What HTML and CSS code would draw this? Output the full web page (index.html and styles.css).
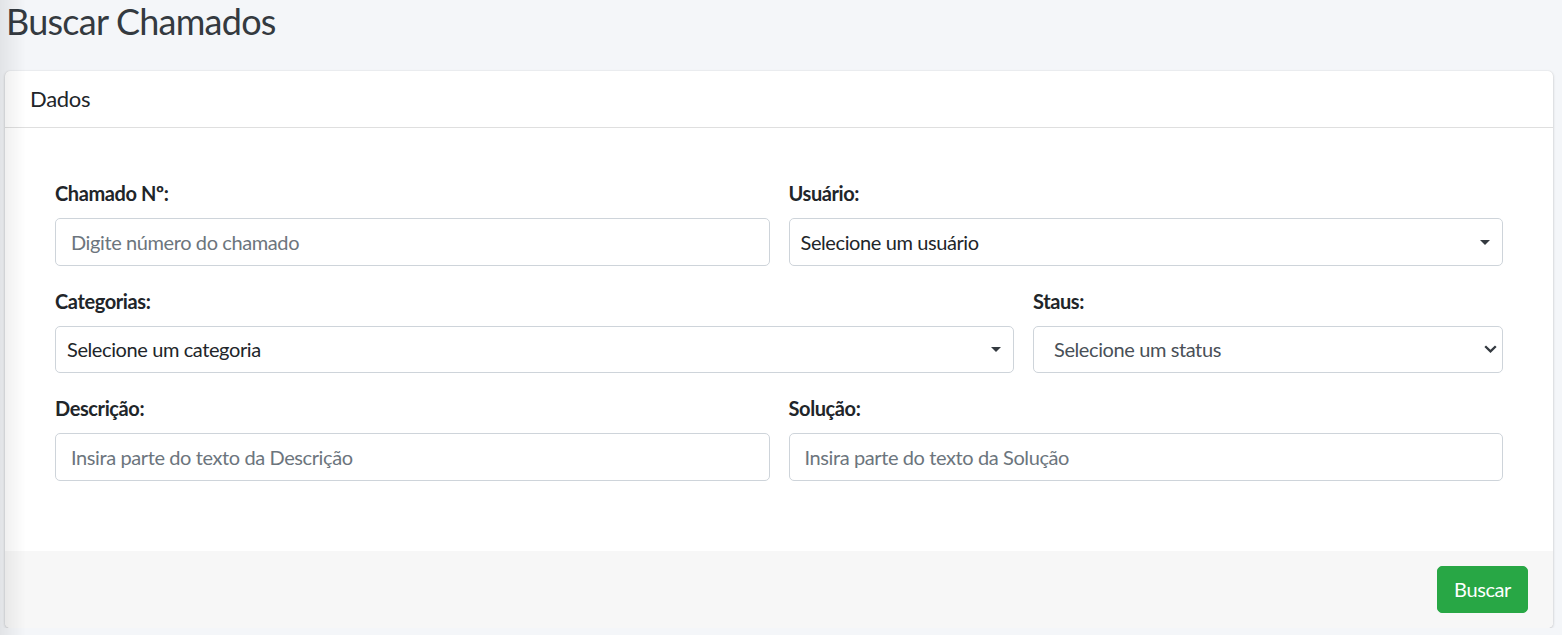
FILE: index.html
```html
<!DOCTYPE html>
<html lang="pt-BR">
<head>
<meta charset="utf-8">
<title>Buscar Chamados</title>
<link rel="stylesheet" href="styles.css">
</head>
<body>
<div class="sidebar-shadow"></div>
<div class="content">
  <h1 class="page-title">Buscar Chamados</h1>
  <div class="card">
    <div class="card-header"><h3 class="card-title">Dados</h3></div>
    <div class="card-body">
      <div class="form-grid">
        <div class="form-group span-3">
          <label class="form-label">Chamado Nº:</label>
          <input class="form-control" type="text" placeholder="Digite número do chamado">
        </div>
        <div class="form-group span-3">
          <label class="form-label">Usuário:</label>
          <div class="select2">
            <span class="select2-text">Selecione um usuário</span>
            <span class="select2-arrow"></span>
          </div>
        </div>
        <div class="form-group span-4">
          <label class="form-label">Categorias:</label>
          <div class="select2">
            <span class="select2-text">Selecione um categoria</span>
            <span class="select2-arrow"></span>
          </div>
        </div>
        <div class="form-group span-2">
          <label class="form-label">Staus:</label>
          <div class="native-select">
            <span class="native-text">Selecione um status</span>
            <svg class="chevron" width="13" height="8" viewBox="0 0 13 8"><path d="M1.2 1.2 L6.5 6.4 L11.8 1.2" fill="none" stroke="#343a40" stroke-width="2.3"/></svg>
          </div>
        </div>
        <div class="form-group span-3">
          <label class="form-label">Descrição:</label>
          <input class="form-control" type="text" placeholder="Insira parte do texto da Descrição">
        </div>
        <div class="form-group span-3">
          <label class="form-label">Solução:</label>
          <input class="form-control" type="text" placeholder="Insira parte do texto da Solução">
        </div>
      </div>
    </div>
    <div class="card-footer">
      <button class="btn-success" type="button">Buscar</button>
    </div>
  </div>
</div>
</body>
</html>
```

FILE: styles.css
```css
* { box-sizing: border-box; }
html, body { margin: 0; padding: 0; }
body {
  background: #f4f6f9;
  font-family: "Source Sans Pro", Lato, "Liberation Sans", sans-serif;
  color: #212529;
  font-size: 20px;
  letter-spacing: -0.4px;
  overflow: hidden;
}
.sidebar-shadow {
  position: fixed;
  top: 0; left: 0; bottom: 0;
  width: 26px;
  background: linear-gradient(to right, rgba(0,0,0,0.07), rgba(0,0,0,0));
  pointer-events: none;
  z-index: 10;
}
.content {
  padding: 0 9px 0 5px;
}
.page-title {
  margin: 0 0 28px 1px;
  font-size: 36px;
  font-weight: 400;
  line-height: 1.2;
  letter-spacing: -0.75px;
  color: #343a40;
}
.card {
  background: #fff;
  border-radius: 5px;
  box-shadow: 0 0 1px rgba(0,0,0,.125), 0 1px 3px rgba(0,0,0,.2);
  overflow: hidden;
}
.card-header {
  padding: 15px 25px;
  border-bottom: 1px solid rgba(0,0,0,.125);
}
.card-title {
  margin: 0;
  font-size: 22px;
  font-weight: 400;
  line-height: 26px;
  letter-spacing: -0.3px;
  color: #212529;
}
.card-body {
  padding: 50px 50px 50px;
}
.form-grid {
  display: grid;
  grid-template-columns: repeat(6, 1fr);
  column-gap: 19px;
}
.span-2 { grid-column: span 2; }
.span-3 { grid-column: span 3; }
.span-4 { grid-column: span 4; }
.form-group {
  margin-bottom: 20px;
}
.form-label {
  display: block;
  font-weight: 700;
  line-height: 30px;
  margin-bottom: 10px;
  color: #212529;
}
.form-control, .select2, .native-select {
  display: flex;
  align-items: center;
  width: 100%;
  height: 47.5px;
  border: 1px solid #ced4da;
  border-radius: 5px;
  background: #fff;
  font-family: inherit;
  font-size: 20px;
  letter-spacing: -0.4px;
  color: #495057;
}
.form-control {
  padding: 7.5px 15px;
  outline: none;
}
.form-control::placeholder { color: #6c757d; opacity: 1; }
.select2 {
  padding: 0 12px 0 11px;
  justify-content: space-between;
  color: #212529;
}
.select2-arrow {
  width: 0; height: 0;
  border-left: 5px solid transparent;
  border-right: 5px solid transparent;
  border-top: 5px solid #343a40;
  margin-top: 1px;
}
.native-select {
  padding: 0 5px 0 20px;
  justify-content: space-between;
  color: #495057;
}
.chevron { display: block; }
.card-footer {
  background: #f7f7f7;
  padding: 15px 25px;
  display: flex;
  justify-content: flex-end;
}
.btn-success {
  height: 47.5px;
  padding: 0 16px;
  border: 1px solid #28a745;
  background: #28a745;
  color: #fff;
  font-family: inherit;
  font-size: 20px;
  letter-spacing: -0.4px;
  border-radius: 5px;
}
```
